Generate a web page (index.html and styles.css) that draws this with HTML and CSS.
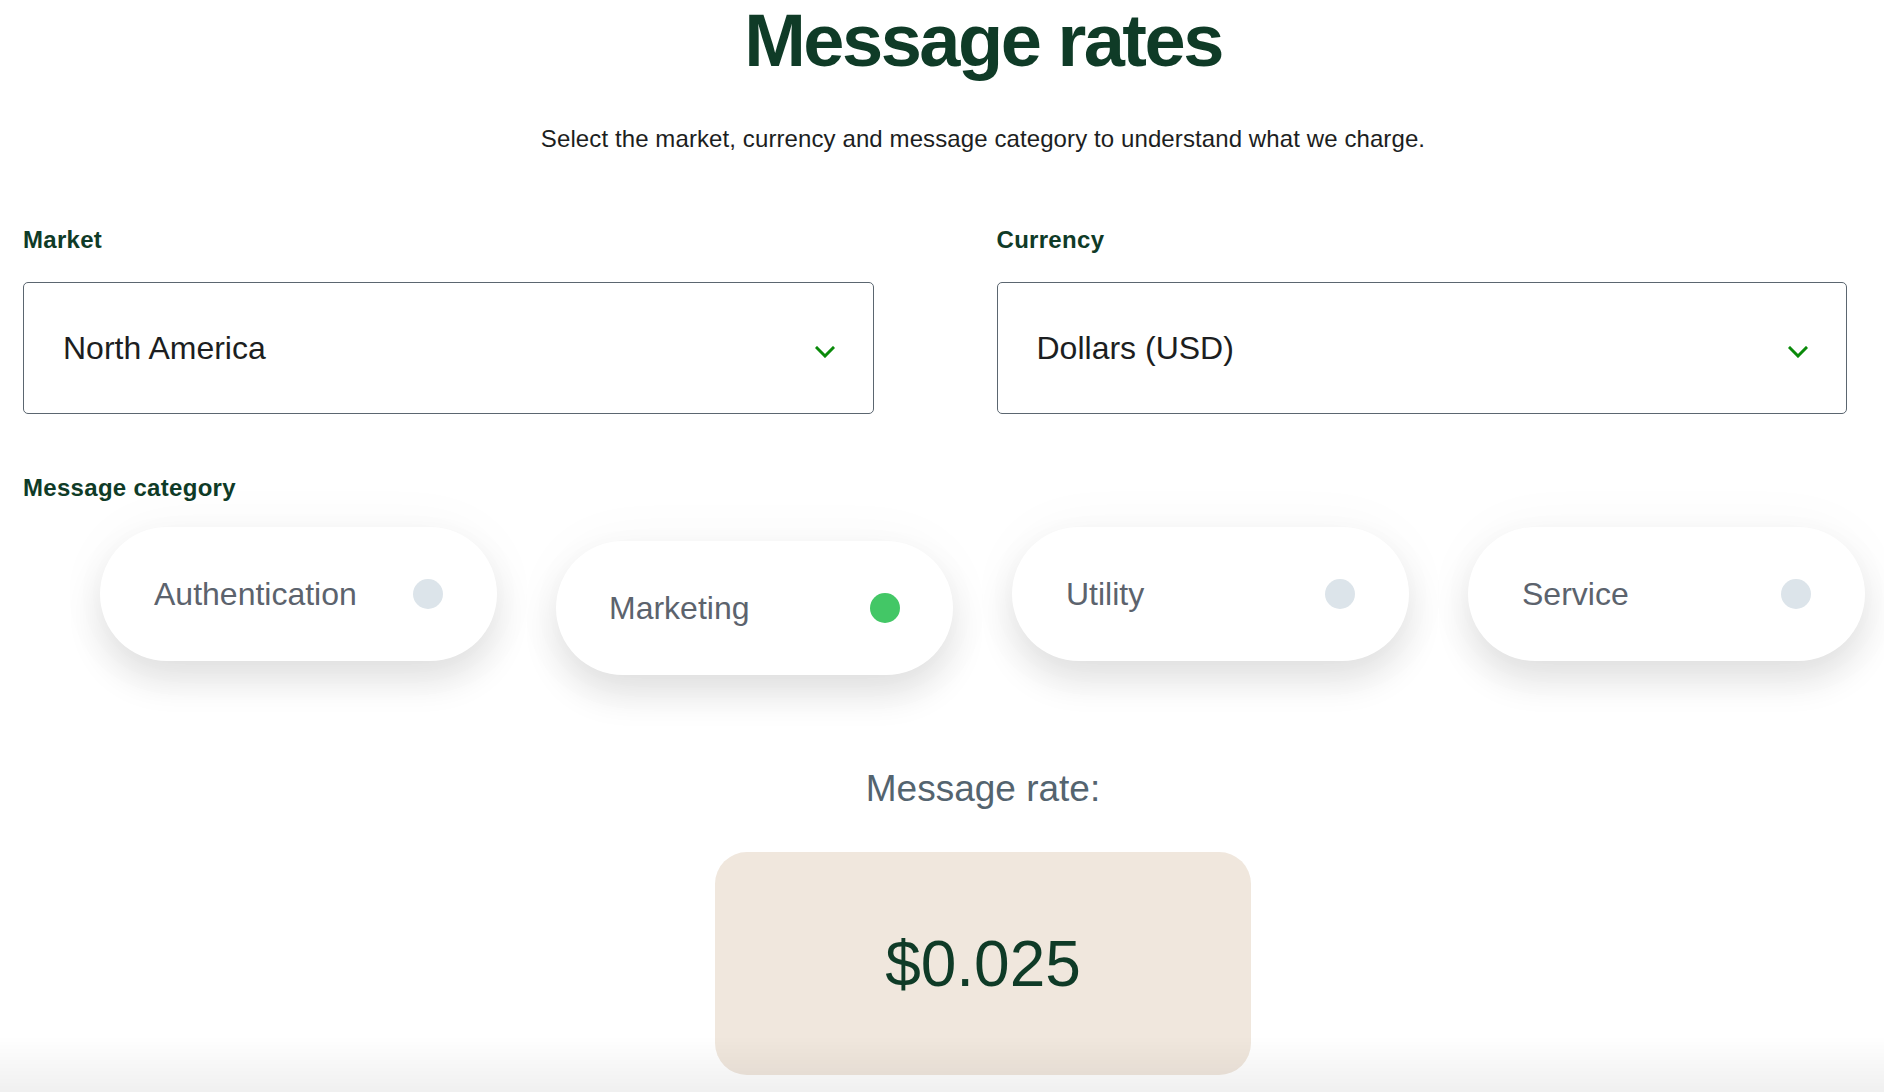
FILE: index.html
```html
<!DOCTYPE html>
<html lang="en">
<head>
<meta charset="utf-8">
<title>Message rates</title>
<link rel="stylesheet" href="styles.css">
</head>
<body>
<main class="rates">
  <header class="intro">
    <h1 class="title">Message rates</h1>
    <p class="subtitle">Select the market, currency and message category to understand what we charge.</p>
  </header>

  <section class="selects">
    <div class="field">
      <div class="field-label">Market</div>
      <div class="select">
        <span class="select-value">North America</span>
        <svg class="chevron" width="20" height="12" viewBox="0 0 20 12" aria-hidden="true"><path d="M2 2 L10 10 L18 2" fill="none" stroke="#0a8a0a" stroke-width="3" stroke-linecap="square"/></svg>
      </div>
    </div>
    <div class="field">
      <div class="field-label">Currency</div>
      <div class="select">
        <span class="select-value">Dollars (USD)</span>
        <svg class="chevron" width="20" height="12" viewBox="0 0 20 12" aria-hidden="true"><path d="M2 2 L10 10 L18 2" fill="none" stroke="#0a8a0a" stroke-width="3" stroke-linecap="square"/></svg>
      </div>
    </div>
  </section>

  <section class="category">
    <div class="field-label">Message category</div>
    <div class="pills">
      <button class="pill"><span>Authentication</span><span class="dot"></span></button>
      <button class="pill pill-active"><span>Marketing</span><span class="dot dot-on"></span></button>
      <button class="pill"><span>Utility</span><span class="dot"></span></button>
      <button class="pill"><span>Service</span><span class="dot"></span></button>
    </div>
  </section>

  <section class="result">
    <div class="result-label">Message rate:</div>
    <div class="result-box">$0.025</div>
  </section>
</main>
<div class="bottom-fade"></div>
</body>
</html>
```

FILE: styles.css
```css
* { box-sizing: border-box; }

html, body {
  margin: 0;
  padding: 0;
  background: #ffffff;
}

body {
  font-family: "Liberation Sans", Arial, Helvetica, sans-serif;
  color: #1c1e21;
  overflow: hidden;
}

.rates {
  display: flex;
  flex-direction: column;
}

.intro {
  padding-left: 82px;
  text-align: center;
}

.title {
  margin: 4px 0 0;
  font-size: 74px;
  line-height: 74px;
  font-weight: 700;
  letter-spacing: -2.5px;
  color: #0f3b27;
}

.subtitle {
  margin: 45px 0 0;
  font-size: 24px;
  line-height: 32px;
  letter-spacing: 0.1px;
  color: #1c1e21;
}

.selects {
  margin-top: 69px;
  padding: 0 37px 0 23px;
  display: grid;
  grid-template-columns: 1fr 1fr;
  column-gap: 123px;
}

.field-label {
  font-size: 24px;
  line-height: 32px;
  font-weight: 700;
  letter-spacing: 0.3px;
  color: #0f3b27;
}

.select {
  margin-top: 26px;
  height: 132px;
  border: 1px solid #5b6670;
  border-radius: 5px;
  display: flex;
  align-items: center;
  justify-content: space-between;
  padding: 0 38px 0 39px;
}

.select-value {
  font-size: 32px;
  color: #1c1e21;
}

.chevron {
  margin-top: 8px;
}

.category {
  margin-top: 58px;
  padding-left: 23px;
}

.pills {
  margin-top: 23px;
  padding-left: 77px;
  display: flex;
  gap: 59px;
  align-items: flex-start;
}

.pill {
  flex: 0 0 397px;
  height: 134px;
  border: none;
  border-radius: 67px;
  background: #ffffff;
  font-family: inherit;
  font-size: 32px;
  color: #5c636d;
  display: flex;
  align-items: center;
  justify-content: space-between;
  padding: 0 54px 0 54px;
  box-shadow: 0 20px 36px rgba(0, 0, 0, 0.11), 0 0 60px rgba(0, 0, 0, 0.035);
  cursor: pointer;
}

.pill-active {
  transform: translateY(14px);
  padding-left: 53px;
  padding-right: 53px;
}

.dot {
  width: 30px;
  height: 30px;
  border-radius: 50%;
  background: #dce4ea;
}

.dot-on {
  background: #43c766;
}

.result {
  margin-top: 106px;
  padding-left: 82px;
  display: flex;
  flex-direction: column;
  align-items: center;
}

.result-label {
  font-size: 37px;
  line-height: 44px;
  color: #54646f;
}

.result-box {
  margin-top: 41px;
  width: 536px;
  height: 223px;
  border-radius: 32px;
  background: #f0e7dd;
  display: flex;
  align-items: center;
  justify-content: center;
  font-size: 64px;
  color: #0f3b27;
}

.bottom-fade {
  position: fixed;
  left: 0;
  right: 0;
  bottom: 0;
  height: 56px;
  background: linear-gradient(to bottom, rgba(0, 0, 0, 0), rgba(0, 0, 0, 0.06));
  pointer-events: none;
}
```
